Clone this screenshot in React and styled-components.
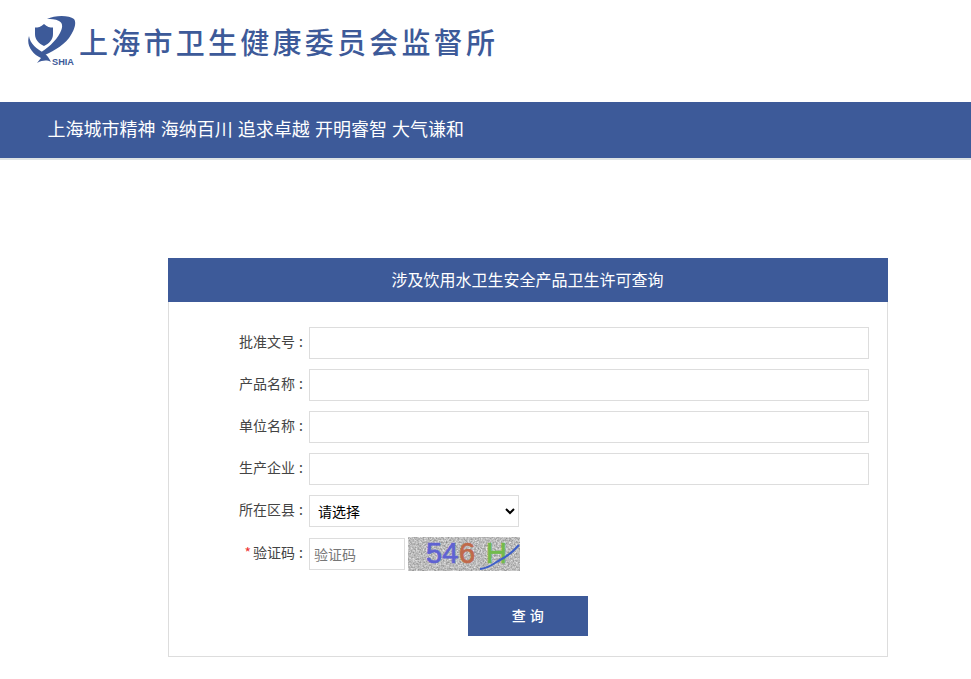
import React from 'react';
import styled, { createGlobalStyle } from 'styled-components';

const FONT = `"Noto Sans CJK SC", "Liberation Sans", sans-serif`;
const BLUE = '#3d5a99';

const GlobalStyle = createGlobalStyle`
  html, body { margin: 0; padding: 0; background: #fff; }
  body { font-family: ${FONT}; color: #333; font-size: 14px; }
`;

const Page = styled.div`
  width: 100%;
  height: 679px;
  overflow: hidden;
`;

const Header = styled.header`
  height: 102px;
  box-sizing: border-box;
  padding: 16px 0 0 27px;
  display: flex;
  align-items: flex-start;
`;

const SiteName = styled.h1`
  margin: 3px 0 0 2px;
  font-size: 29px;
  line-height: 44px;
  font-weight: 500;
  letter-spacing: 3.25px;
  color: ${BLUE};
  white-space: nowrap;
`;

const Banner = styled.div`
  height: 56px;
  box-sizing: border-box;
  padding-left: 47.5px;
  background: ${BLUE};
  color: #fff;
  font-size: 18px;
  line-height: 52px;
  word-spacing: 1.1px;
  box-shadow: 0 2px 0 #dfe3e4;
`;

const Card = styled.section`
  width: 720px;
  margin: 100px 0 0 168px;
`;

const CardTitle = styled.h2`
  margin: 0;
  height: 44px;
  background: ${BLUE};
  color: #fff;
  font-size: 16px;
  font-weight: 400;
  line-height: 42px;
  text-align: center;
  padding-right: 1px;
`;

const CardBody = styled.form`
  box-sizing: border-box;
  height: 355px;
  padding: 25px 18px 0 0;
  border: 1px solid #ddd;
  border-top: 0;
`;

const Row = styled.div`
  display: flex;
  align-items: flex-start;
  height: 32px;
  margin-bottom: ${(p) => p.$gap ?? 10}px;
`;

const Label = styled.label`
  width: 140px;
  flex: none;
  box-sizing: border-box;
  padding-right: 6px;
  text-align: right;
  font-size: 14px;
  line-height: 28px;
  word-spacing: 1px;
  color: #444;
  white-space: nowrap;
`;

const Star = styled.span`
  color: #e33;
  margin-right: 2px;
`;

const TextInput = styled.input`
  box-sizing: border-box;
  width: ${(p) => p.$width}px;
  height: 32px;
  padding: 0 4px;
  border: 1px solid #ddd;
  border-radius: 0;
  outline: 0;
  background: #fff;
  font-family: ${FONT};
  font-size: 14px;
  color: #333;
  &::placeholder { color: #777; opacity: 1; }
`;

const Select = styled.select`
  box-sizing: border-box;
  width: 210px;
  height: 32px;
  padding-left: 4px;
  border: 1px solid #ddd;
  border-radius: 0;
  outline: 0;
  background: #fff;
  font-family: ${FONT};
  font-size: 14px;
  color: #000;
`;

const CaptchaFrame = styled.svg`
  display: block;
  flex: none;
  margin: -1px 0 0 3px;
`;

const SubmitRow = styled.div`
  display: flex;
  justify-content: center;
  padding-left: 18px;
  margin-top: 26px;
`;

const SubmitButton = styled.button`
  width: 120px;
  height: 40px;
  padding: 0 0 2px;
  border: 0;
  background: ${BLUE};
  color: #fff;
  font-family: ${FONT};
  font-size: 14px;
  font-weight: 500;
  letter-spacing: 0.5px;
`;

function Logo() {
  return (
    <svg width="50" height="50" viewBox="0 0 50 50" style={{ flex: 'none' }}>
      {/* shield */}
      <path d="M17 8 C14 11 11 11.5 8 11.5 L8 18 C8 24 12 27.5 17 30 C22 27.5 26 24 26 18 L26 11.5 C23 11.5 20 11 17 8 Z" fill={BLUE} />
      {/* upper swoosh */}
      <path d="M20 3 C28 -1 42 -1 47 3 C50 7 47 15 42 22 C35 31 24 36 14 41 L11 38 C20 33 29 25 33 17 C36 11 36 7 32 5 C28 3 24 3 20 3 Z" fill={BLUE} />
      {/* lower swoosh */}
      <path d="M2 20 C3 28 10 33 17 37 C20 39 22 42 24 46 C20 44 16 44 10 47 L14 42 C5 38 -1 29 2 20 Z" fill={BLUE} />
      <text x="25" y="49" fontFamily="Liberation Sans" fontWeight="700" fontSize="9.2" fill={BLUE}>SHIA</text>
    </svg>
  );
}

function Captcha() {
  return (
    <CaptchaFrame width="112" height="34" viewBox="0 0 112 34">
      <defs>
        <filter id="grain" x="0" y="0" width="100%" height="100%" colorInterpolationFilters="sRGB">
          <feTurbulence type="fractalNoise" baseFrequency="0.6" numOctaves="2" seed="7" />
          <feColorMatrix values="0.55 0 0 0 0.46  0.55 0 0 0 0.46  0.55 0 0 0 0.46  0 0 0 0 1" />
          <feGaussianBlur stdDeviation="0.5" />
        </filter>
      </defs>
      <rect width="112" height="34" filter="url(#grain)" />
      <g fontFamily="Liberation Sans" fontSize="29" strokeWidth="0.7">
        <text x="18" y="26" fill="#5f62d2" stroke="#5f62d2">5</text>
        <text x="34.2" y="26" fill="#5f62d2" stroke="#5f62d2">4</text>
        <text x="51" y="26" fill="#c0694a" stroke="#c0694a">6</text>
        <text x="78" y="26" fill="#72bb4c" stroke="#72bb4c">H</text>
      </g>
      <path d="M72 32 C82 31 86 26 92 23 C98 20 104 16 111 8" fill="none" stroke="#3f60c8" strokeWidth="2" />
    </CaptchaFrame>
  );
}

const FIELDS = ['批准文号', '产品名称', '单位名称', '生产企业'];

export default function App() {
  return (
    <Page>
      <GlobalStyle />
      <Header>
        <Logo />
        <SiteName>上海市卫生健康委员会监督所</SiteName>
      </Header>
      <Banner>上海城市精神 海纳百川 追求卓越 开明睿智 大气谦和</Banner>
      <Card>
        <CardTitle>涉及饮用水卫生安全产品卫生许可查询</CardTitle>
        <CardBody>
          {FIELDS.map((name) => (
            <Row key={name}>
              <Label>{name} :</Label>
              <TextInput $width={560} />
            </Row>
          ))}
          <Row $gap={11}>
            <Label>所在区县 :</Label>
            <Select defaultValue="">
              <option value="">请选择</option>
            </Select>
          </Row>
          <Row $gap={0}>
            <Label><Star>*</Star>验证码 :</Label>
            <TextInput $width={96} placeholder="验证码" />
            <Captcha />
          </Row>
          <SubmitRow>
            <SubmitButton type="button">查 询</SubmitButton>
          </SubmitRow>
        </CardBody>
      </Card>
    </Page>
  );
}
